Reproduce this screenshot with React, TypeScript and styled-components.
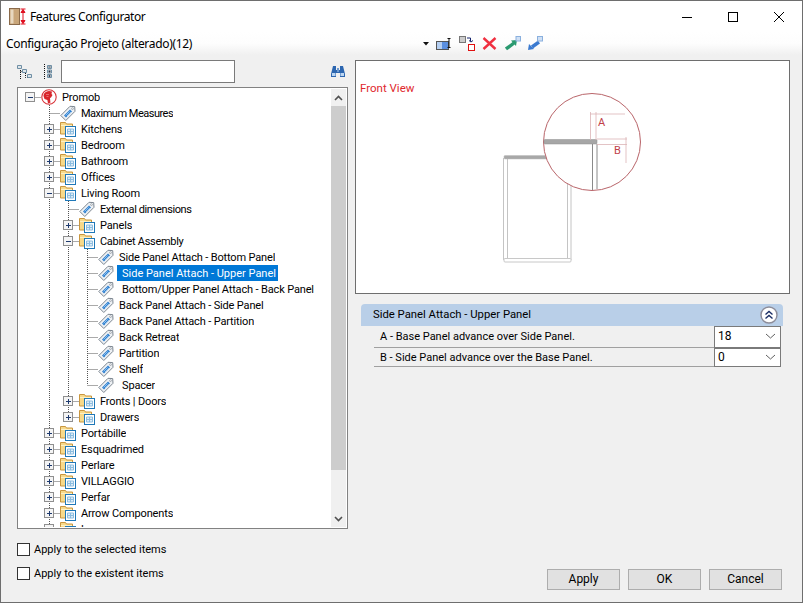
import React from 'react';
import styled, { createGlobalStyle } from 'styled-components';

const GlobalStyle = createGlobalStyle`
  html, body { margin: 0; padding: 0; overflow: hidden; background: #f0f0f0; }
  * { box-sizing: border-box; }
`;

const TITLE_FONT = '"Noto Sans", "Open Sans", "Liberation Sans", sans-serif';
const FONT = 'Roboto, "Liberation Sans", sans-serif';

const Window = styled.div`
  width: 803px;
  height: 603px;
  display: flex;
  flex-direction: column;
  border: 1px solid #6e6e6e;
  background: #f0f0f0;
  font-family: ${FONT};
  font-size: 11px;
  color: #000;
`;

const TitleBar = styled.div`
  height: 31px;
  flex: none;
  display: flex;
  align-items: center;
  background: #fff;
  padding-left: 8px;
`;

const TitleText = styled.span`
  margin-left: 3px;
  font-family: ${TITLE_FONT};
  font-size: 12px;
  letter-spacing: -0.42px;
  flex: 1;
`;

const WinControl = styled.div`
  width: 46px;
  height: 31px;
  display: flex;
  align-items: center;
  justify-content: center;
`;

const ToolBar = styled.div`
  height: 23px;
  flex: none;
  display: flex;
  align-items: center;
  padding-left: 5px;
  background: linear-gradient(#ffffff, #fdfdfd 50%, #f0f0f0);
`;

const ToolLabel = styled.span`
  width: 414px;
  font-family: ${TITLE_FONT};
  font-size: 12px;
  letter-spacing: -0.33px;
`;

const ToolIcon = styled.svg<{ $gap?: number }>`
  flex: none;
  display: block;
  margin-left: ${(p) => p.$gap || 0}px;
`;

const Main = styled.div`
  flex: 1;
  min-height: 0;
  display: flex;
  padding: 5px 12px 12px 16px;
  gap: 7px;
`;

const LeftColumn = styled.div`
  width: 331px;
  flex: none;
  display: flex;
  flex-direction: column;
`;

const SearchRow = styled.div`
  height: 23px;
  flex: none;
  display: flex;
  align-items: center;
  margin-bottom: 4px;
`;

const SearchInput = styled.div`
  width: 174px;
  height: 23px;
  margin-left: 4px;
  border: 1px solid #7a7a7a;
  background: #fff;
`;

const TreeBox = styled.div`
  height: 442px;
  flex: none;
  display: flex;
  border: 1px solid #828282;
  background: #fff;
  padding: 1px;
  overflow: hidden;
`;

const TreeList = styled.div`
  flex: 1;
  overflow: hidden;
`;

const Row = styled.div`
  position: relative;
  height: 16px;
  display: flex;
  align-items: center;
`;

const Connector = styled.svg`
  position: absolute;
  left: 0;
  top: 0;
`;

const NodeIcon = styled.svg<{ $left: number }>`
  flex: none;
  position: relative;
  margin-left: ${(p) => p.$left}px;
`;

const NodeLabel = styled.span<{ $gap: number; $selected?: boolean; $spacing: number }>`
  position: relative;
  margin-left: ${(p) => p.$gap}px;
  padding: 0 ${(p) => (p.$selected ? '2px 0 5px' : '0')};
  height: 16px;
  line-height: 18px;
  white-space: nowrap;
  overflow: hidden;
  letter-spacing: ${(p) => p.$spacing}px;
  color: ${(p) => (p.$selected ? '#fff' : '#000')};
  background: ${(p) => (p.$selected ? '#0078d7' : 'transparent')};
`;

const ScrollBar = styled.div`
  width: 15px;
  flex: none;
  background: #f0f0f0;
  display: flex;
  flex-direction: column;
`;

const ScrollArrow = styled.div`
  height: 17px;
  flex: none;
  display: flex;
  align-items: center;
  justify-content: center;
`;

const ScrollThumb = styled.div`
  height: 364px;
  flex: none;
  background: #cdcdcd;
`;

const ScrollTrack = styled.div`
  flex: 1;
`;

const CheckRow = styled.label<{ $top: number }>`
  display: flex;
  align-items: center;
  height: 13px;
  margin-top: ${(p) => p.$top}px;
`;

const CheckBox = styled.span`
  width: 13px;
  height: 13px;
  flex: none;
  border: 1px solid #333;
  background: #fff;
  margin-right: 4px;
`;

const RightColumn = styled.div`
  flex: 1;
  min-width: 0;
  display: flex;
  flex-direction: column;
`;

const Preview = styled.div`
  height: 234px;
  flex: none;
  display: flex;
  align-items: flex-start;
  border: 1px solid #6e6e6e;
  background: #fff;
`;

const ViewLabel = styled.span`
  margin: 20px 0 0 4px;
  width: 120px;
  color: #e0282e;
  font-size: 11.5px;
  line-height: 14px;
`;

const Diagram = styled.svg`
  margin-top: 19px;
  flex: none;
`;

const PanelHeader = styled.div`
  height: 22px;
  flex: none;
  margin: 10px 7px 0 6px;
  display: flex;
  align-items: center;
  justify-content: space-between;
  padding: 0 5px 1px 12px;
  background: #b9cfe8;
  border-radius: 4px 4px 0 0;
  font-size: 11.3px;
`;

const CollapseButton = styled.svg`
  flex: none;
`;

const PropertyRow = styled.div<{ $height: number }>`
  height: ${(p) => p.$height}px;
  flex: none;
  display: flex;
  align-items: center;
  margin: 0 9px 0 19px;
  border-bottom: 1px solid #a0a0a0;
`;

const PropertyName = styled.span`
  width: 340px;
  padding-left: 6px;
`;

const ValueBox = styled.div`
  width: 67px;
  height: calc(100% + 1px);
  margin-bottom: -1px;
  flex: none;
  display: flex;
  align-items: center;
  justify-content: space-between;
  padding: 0 4px 2px 3px;
  background: #fff;
  border: 1px solid #7a7a7a;
  font-size: 12px;
`;

const Footer = styled.div`
  margin-top: auto;
  display: flex;
  gap: 8px;
  padding-left: 192px;
`;

const DialogButton = styled.button`
  width: 73px;
  height: 21px;
  padding: 0 0 1px;
  border: 1px solid #adadad;
  background: #e1e1e1;
  font-family: ${FONT};
  font-size: 12px;
  color: #000;
`;

const FolderIcon = ({ left }: { left: number }) => (
  <NodeIcon $left={left} width="16" height="16" viewBox="0 0 16 16">
    <path d="M0.5 13V1.5h5l1 1.5h6v10z" fill="#f7d98a" stroke="#c9963f" />
    <path d="M1 4.5h11" stroke="#fdf0c4" />
    <rect x="5.5" y="5.5" width="10" height="10" fill="#fff" stroke="#1f78b8" />
    <path d="M7.5 8h6v5h-6zM10.5 8v5M7.5 10.5h6" fill="#dcecf7" stroke="#8dbde0" />
  </NodeIcon>
);

const TagIcon = ({ left }: { left: number }) => (
  <NodeIcon $left={left} width="16" height="16" viewBox="0 0 16 16">
    <path d="M0.8 10.5 10 1.3l4.7 0.3 0.3 4.7-9.2 9.2z" fill="#eef1f4" stroke="#7d8791" />
    <path d="M4 10.5 10 4.5l2 2-6 6z" fill="#2f80d0" />
    <path d="M5.6 10.4 9.6 6.4M7 11 11 7" stroke="#a9d0f2" strokeWidth="0.8" />
    <circle cx="12.5" cy="3.6" r="0.9" fill="#fff" stroke="#7d8791" strokeWidth="0.6" />
  </NodeIcon>
);

const PromobIcon = ({ left }: { left: number }) => (
  <NodeIcon $left={left} width="16" height="16" viewBox="0 0 16 16">
    <circle cx="8" cy="8" r="7.2" fill="#fff" stroke="#d9343a" strokeWidth="1.1" />
    <path d="M2.5 7C2.5 4 5 2.2 8 2L11 2.4 10.5 5 11.5 6 10 8.5 9 9l.4 4.8-2.4.6-.6-3.4L3.5 10z" fill="#d8262c" />
    <path d="M5 5.5h3M5.5 7.5h2" stroke="#f28b8e" strokeWidth="0.7" />
  </NodeIcon>
);

type Kind = 'root' | 'folder' | 'leaf';

interface TreeItem {
  label: string;
  level: number;
  kind: Kind;
  expander?: 'plus' | 'minus';
  rails: number[];
  extra?: number;
  selected?: boolean;
  last?: boolean;
  spacing?: number;
}

// x of each dotted rail relative to the list, one step is 19px
const railX = [11, 30, 49, 68];

const treeItems: TreeItem[] = [
  { label: 'Promob', level: 0, kind: 'root', expander: 'minus', rails: [] },
  { label: 'Maximum Measures', level: 1, kind: 'leaf', rails: [], spacing: -0.5 },
  { label: 'Kitchens', level: 1, kind: 'folder', expander: 'plus', rails: [] },
  { label: 'Bedroom', level: 1, kind: 'folder', expander: 'plus', rails: [] },
  { label: 'Bathroom', level: 1, kind: 'folder', expander: 'plus', rails: [] },
  { label: 'Offices', level: 1, kind: 'folder', expander: 'plus', rails: [] },
  { label: 'Living Room', level: 1, kind: 'folder', expander: 'minus', rails: [] },
  { label: 'External dimensions', level: 2, kind: 'leaf', rails: [1], spacing: -0.4 },
  { label: 'Panels', level: 2, kind: 'folder', expander: 'plus', rails: [1] },
  { label: 'Cabinet Assembly', level: 2, kind: 'folder', expander: 'minus', rails: [1], spacing: -0.3 },
  { label: 'Side Panel Attach - Bottom Panel', level: 3, kind: 'leaf', rails: [1, 2] },
  { label: 'Side Panel Attach - Upper Panel', level: 3, kind: 'leaf', rails: [1, 2], selected: true, spacing: 0 },
  { label: 'Bottom/Upper Panel Attach - Back Panel', level: 3, kind: 'leaf', rails: [1, 2], extra: 3 },
  { label: 'Back Panel Attach - Side Panel', level: 3, kind: 'leaf', rails: [1, 2] },
  { label: 'Back Panel Attach - Partition', level: 3, kind: 'leaf', rails: [1, 2] },
  { label: 'Back Retreat', level: 3, kind: 'leaf', rails: [1, 2] },
  { label: 'Partition', level: 3, kind: 'leaf', rails: [1, 2] },
  { label: 'Shelf', level: 3, kind: 'leaf', rails: [1, 2] },
  { label: 'Spacer', level: 3, kind: 'leaf', rails: [1, 2], extra: 3, last: true },
  { label: 'Fronts | Doors', level: 2, kind: 'folder', expander: 'plus', rails: [1] },
  { label: 'Drawers', level: 2, kind: 'folder', expander: 'plus', rails: [1], last: true },
  { label: 'Portábille', level: 1, kind: 'folder', expander: 'plus', rails: [] },
  { label: 'Esquadrimed', level: 1, kind: 'folder', expander: 'plus', rails: [] },
  { label: 'Perlare', level: 1, kind: 'folder', expander: 'plus', rails: [] },
  { label: 'VILLAGGIO', level: 1, kind: 'folder', expander: 'plus', rails: [] },
  { label: 'Perfar', level: 1, kind: 'folder', expander: 'plus', rails: [] },
  { label: 'Arrow Components', level: 1, kind: 'folder', expander: 'plus', rails: [] },
  { label: 'L', level: 1, kind: 'folder', expander: 'plus', rails: [] },
];

const DOT = { stroke: '#555', strokeDasharray: '1 1', fill: 'none' };
const ICON_DOT = { stroke: '#111', strokeDasharray: '1 1', fill: 'none' };

const RowLines = ({ item }: { item: TreeItem }) => {
  const x = railX[item.level];
  return (
    <Connector width="120" height="16">
      {item.rails.map((r) => (
        <line key={r} x1={railX[r] + 0.5} x2={railX[r] + 0.5} y1="0" y2="16" {...DOT} />
      ))}
      {item.level > 0 && (
        <line x1={x + 0.5} x2={x + 0.5} y1="0" y2={item.last ? 8 : 16} {...DOT} />
      )}
      <line x1={x + 0.5} x2={x + 11} y1="8.5" y2="8.5" {...DOT} />
      {item.expander && (
        <g>
          <rect x={x - 4.5} y="3.5" width="9" height="9" fill="#f4f4f4" stroke="#8f8f8f" />
          <path d={`M${x - 2} 8.5h5`} stroke="#1e3a6e" />
          {item.expander === 'plus' && <path d={`M${x + 0.5} 6v5`} stroke="#1e3a6e" />}
        </g>
      )}
    </Connector>
  );
};

const TreeRow = ({ item }: { item: TreeItem }) => {
  const left = railX[item.level] + 11;
  const gap = 5 + (item.extra || 0);
  const spacing = item.spacing ?? -0.15;
  return (
    <Row>
      <RowLines item={item} />
      {item.kind === 'root' && <PromobIcon left={left} />}
      {item.kind === 'folder' && <FolderIcon left={left} />}
      {item.kind === 'leaf' && <TagIcon left={left} />}
      {item.selected ? (
        <NodeLabel $gap={3} $selected $spacing={spacing}>{item.label}</NodeLabel>
      ) : (
        <NodeLabel $gap={gap} $spacing={spacing}>{item.label}</NodeLabel>
      )}
    </Row>
  );
};

const TitleIcon = () => (
  <ToolIcon width="18" height="17" viewBox="0 0 18 17">
    <rect x="0.5" y="0.5" width="10" height="16" fill="#c9a67a" stroke="#8a6a4a" />
    <rect x="1.5" y="1.5" width="3" height="14" fill="#e8d8c0" />
    <path d="M14 1.5v14M11.5 1h5M11.5 16h5M12 4.5l2-3 2 3zM12 12.5l2 3 2-3z" stroke="#e01020" fill="#e01020" />
  </ToolIcon>
);

const SearchGlass = () => (
  <ToolIcon $gap={95} width="16" height="13" viewBox="0 0 16 13">
    <path d="M3 1h3v4h4V1h3l2 8v3h-5V8H6v4H1V9z" fill="#2c66b0" />
    <rect x="2" y="8" width="3.5" height="3" fill="#bcd6f2" />
    <rect x="10.5" y="8" width="3.5" height="3" fill="#bcd6f2" />
    <rect x="7" y="3" width="2" height="4" fill="#6e9ad0" />
  </ToolIcon>
);

const ExpandAllIcon = () => (
  <ToolIcon width="17" height="15" viewBox="0 0 17 15">
    <path d="M3.5 4v11M3.5 7.5H6M8.5 9v4.5H11" {...ICON_DOT} />
    <path d="M0.5 1.5h4v3h-4zM5.5 5.5h4v3h-4zM10.5 10.5h4v3h-4z" fill="#dfe5e9" stroke="#6f8fa5" />
  </ToolIcon>
);

const CollapseAllIcon = () => (
  <ToolIcon $gap={9} width="14" height="15" viewBox="0 0 14 15">
    <path d="M1.5 0v15" {...ICON_DOT} />
    <path d="M4.5 1.5h4v3h-4zM4.5 6h4v3h-4zM4.5 10.5h4v3h-4z" fill="#c8d0d4" stroke="#6f8fa5" />
    <path d="M5.5 3h2M5.5 7.5h2M5.5 12h2M6.5 6.5v2M6.5 11v2" stroke="#223" strokeWidth="0.7" />
  </ToolIcon>
);

const Chevron = () => (
  <svg width="11" height="6" viewBox="0 0 11 6">
    <path d="M1 1l4.5 4L10 1" fill="none" stroke="#606060" />
  </svg>
);

export default function App() {
  return (
    <Window>
      <GlobalStyle />
      <TitleBar>
        <TitleIcon />
        <TitleText>Features Configurator</TitleText>
        <WinControl>
          <svg width="10" height="10"><path d="M0 5.5h10" stroke="#000" /></svg>
        </WinControl>
        <WinControl>
          <svg width="10" height="10"><rect x="0.5" y="0.5" width="9" height="9" fill="none" stroke="#000" /></svg>
        </WinControl>
        <WinControl>
          <svg width="10" height="10"><path d="M0 0l10 10M10 0L0 10" stroke="#000" /></svg>
        </WinControl>
      </TitleBar>

      <ToolBar>
        <ToolLabel>Configuração Projeto (alterado)(12)</ToolLabel>
        <ToolIcon $gap={3} width="6" height="4" viewBox="0 0 6 4"><path d="M0 0h6L3 3.5z" fill="#111" /></ToolIcon>
        <ToolIcon $gap={7} width="16" height="12" viewBox="0 0 16 12">
          <rect x="0.5" y="3.5" width="12" height="8" fill="#5a8fe0" stroke="#555" />
          <rect x="1" y="4" width="5" height="7" fill="#b5cff2" />
          <path d="M11.5 0.5h3M13 0.5v9M11.5 9.5h3" stroke="#111" fill="none" />
        </ToolIcon>
        <ToolIcon $gap={7} width="17" height="17" viewBox="0 0 17 17">
          <rect x="0.5" y="1.5" width="6" height="6" fill="#ccc" stroke="#777" />
          <rect x="9.5" y="9.5" width="6" height="6" fill="#fff" stroke="#e01010" />
          <path d="M8 3h3.5v3M10 5.5l2 1.5 2-1.5" stroke="#14246e" fill="none" />
        </ToolIcon>
        <ToolIcon $gap={6} width="15" height="13" viewBox="0 0 15 13">
          <path d="M1.5 1l12 11M13.5 1l-12 11" stroke="#f03040" strokeWidth="2.4" />
        </ToolIcon>
        <ToolIcon $gap={8} width="16" height="16" viewBox="0 0 16 16">
          <path d="M1 13l8-6" stroke="#2a9a70" strokeWidth="3.4" />
          <path d="M6 4.5l6-.5-1 6z" fill="#2a9a70" />
          <rect x="11" y="0.5" width="4.5" height="4.5" fill="#cfe0f5" stroke="#8ab0de" />
        </ToolIcon>
        <ToolIcon $gap={6} width="16" height="16" viewBox="0 0 16 16">
          <path d="M5 11l7-5" stroke="#3a7ad0" strokeWidth="3.4" />
          <path d="M1 14l1-6 5 5z" fill="#3a7ad0" />
          <rect x="10.5" y="0.5" width="5" height="4.5" fill="#cfe0f5" stroke="#8ab0de" />
        </ToolIcon>
      </ToolBar>

      <Main>
        <LeftColumn>
          <SearchRow>
            <ExpandAllIcon />
            <CollapseAllIcon />
            <SearchInput />
            <SearchGlass />
          </SearchRow>
          <TreeBox>
            <TreeList>
              {treeItems.map((item) => (
                <TreeRow key={item.label} item={item} />
              ))}
            </TreeList>
            <ScrollBar>
              <ScrollArrow>
                <svg width="9" height="6" viewBox="0 0 9 6"><path d="M1 5l3.5-3.5L8 5" fill="none" stroke="#505050" strokeWidth="1.6" /></svg>
              </ScrollArrow>
              <ScrollThumb />
              <ScrollTrack />
              <ScrollArrow>
                <svg width="9" height="6" viewBox="0 0 9 6"><path d="M1 1l3.5 3.5L8 1" fill="none" stroke="#505050" strokeWidth="1.6" /></svg>
              </ScrollArrow>
            </ScrollBar>
          </TreeBox>
          <CheckRow $top={14}><CheckBox />Apply to the selected items</CheckRow>
          <CheckRow $top={11}><CheckBox />Apply to the existent items</CheckRow>
        </LeftColumn>

        <RightColumn>
          <Preview>
            <ViewLabel>Front View</ViewLabel>
            <Diagram width="180" height="190" viewBox="480 80 180 190">
              <g fill="none" stroke="#c4c4c4">
                <path d="M503.5 158v102M507.5 158v102M567.5 158v102M571 158v102" />
              </g>
              <rect x="504" y="155.5" width="67" height="3.5" rx="1" fill="#a8a8a8" stroke="#bdbdbd" strokeWidth="0.5" />
              <rect x="504" y="258.5" width="67" height="3.5" rx="1" fill="#fff" stroke="#c8c8c8" />
              <circle cx="592" cy="142" r="48.5" fill="#fff" stroke="#b9656a" strokeWidth="1" />
              <rect x="544" y="139.5" width="53" height="4.5" rx="1" fill="#a6a6a6" stroke="#8f8f8f" strokeWidth="0.5" />
              <path d="M592.5 144v46M597 144v45" stroke="#8a8a8a" strokeWidth="1" fill="none" />
              <g stroke="#dcb4b6" strokeWidth="0.8" fill="none">
                <path d="M590.5 112v28M596 112v28M590 114h35M597 139h30M597 144.5h30M626 137v26" />
              </g>
              <text x="598" y="126" fontSize="11" fill="#c04048" fontFamily={FONT}>A</text>
              <text x="614" y="154" fontSize="11" fill="#c04048" fontFamily={FONT}>B</text>
            </Diagram>
          </Preview>
          <PanelHeader>
            Side Panel Attach - Upper Panel
            <CollapseButton width="18" height="18" viewBox="0 0 18 18">
              <circle cx="9" cy="9" r="8" fill="#fff" stroke="#8d8d9a" strokeWidth="1.4" />
              <path d="M5.5 8.5l3.5-3 3.5 3M5.5 12.5l3.5-3 3.5 3" fill="none" stroke="#1c2f66" strokeWidth="1.4" />
            </CollapseButton>
          </PanelHeader>
          <PropertyRow $height={22}>
            <PropertyName>A - Base Panel advance over Side Panel.</PropertyName>
            <ValueBox>18<Chevron /></ValueBox>
          </PropertyRow>
          <PropertyRow $height={19}>
            <PropertyName>B - Side Panel advance over the Base Panel.</PropertyName>
            <ValueBox>0<Chevron /></ValueBox>
          </PropertyRow>
          <Footer>
            <DialogButton>Apply</DialogButton>
            <DialogButton>OK</DialogButton>
            <DialogButton>Cancel</DialogButton>
          </Footer>
        </RightColumn>
      </Main>
    </Window>
  );
}
